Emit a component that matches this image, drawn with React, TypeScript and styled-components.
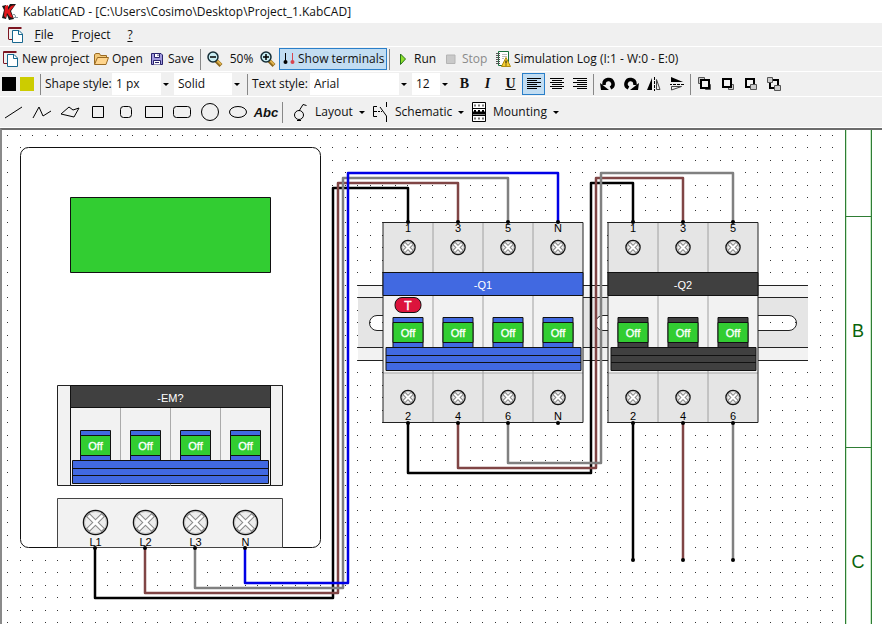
import React from "react";
import styled, { createGlobalStyle, css } from "styled-components";

const Global = createGlobalStyle`
  * { box-sizing: border-box; }
  body { margin: 0; overflow: hidden; }
  button, select { font: inherit; color: inherit; }
`;

const Window = styled.div`
  display: flex;
  flex-direction: column;
  height: 100vh;
  background: #f0f0f0;
  color: #111;
  font: 12px/16px "Open Sans", "Noto Sans", sans-serif;
`;

const TitleBar = styled.header`
  display: flex;
  align-items: center;
  gap: 4px;
  height: 23px;
  padding-left: 2px;
  background: #fff;
  white-space: nowrap;
`;

const TitleText = styled.h1`
  margin: 0;
  font-size: 12px;
  font-weight: 400;
`;

const MenuBar = styled.nav`
  display: flex;
  align-items: center;
  height: 23px;
  padding-left: 8px;
`;

const MenuButton = styled.button<{ $w: number }>`
  width: ${(p) => p.$w}px;
  padding: 0;
  border: 0;
  background: none;
  text-align: center;
  u { text-underline-offset: 2px; }
`;

const Bar = styled.div<{ $h: number; $indent?: boolean; $last?: boolean }>`
  display: flex;
  flex: none;
  align-items: center;
  height: ${(p) => p.$h}px;
  padding-left: ${(p) => (p.$indent ? 2 : 0)}px;
  border-top: 1px solid #fff;
  ${(p) => p.$last && "border-bottom: 1px solid #fff;"}
  white-space: nowrap;
`;

const Separator = styled.span`
  flex: none;
  width: 5px;
  height: 21px;
  background: linear-gradient(#888, #888) center / 1px 100% no-repeat;
`;

const ToolButton = styled.button<{ $w: number; $on?: boolean; $menu?: boolean }>`
  display: flex;
  flex: none;
  align-items: center;
  gap: ${(p) => (p.$menu ? 6 : 3)}px;
  width: ${(p) => p.$w}px;
  height: 22px;
  padding: ${(p) => (p.$menu ? "0 2px 0 7px" : "0 2px")};
  border: 1px solid transparent;
  background: none;
  &:disabled { color: #8a8a8a; }
  ${(p) =>
    p.$on &&
    css`
      border-color: #2a7fc9;
      background: #c2ddf2;
    `}
`;

const IconButton = styled(ToolButton)`
  justify-content: center;
  padding: 0;
`;

const Letter = styled.span<{ $kind: "b" | "i" | "u" | "abc" }>`
  font-family: "Liberation Serif", serif;
  font-size: 14px;
  font-weight: 700;
  ${(p) => p.$kind === "i" && "font-style: italic;"}
  ${(p) => p.$kind === "u" && "text-decoration: underline;"}
  ${(p) => p.$kind === "abc" && 'font: italic 700 13px "Liberation Sans", sans-serif;'}
`;

const Caret = styled.span`
  width: 0;
  height: 0;
  margin-left: auto;
  border: 3px solid transparent;
  border-top-color: #000;
  border-bottom: 0;
`;

const Swatch = styled.button<{ $color: string }>`
  flex: none;
  width: 14px;
  height: 14px;
  margin-right: 4px;
  padding: 0;
  border: 0;
  background: ${(p) => p.$color};
`;

const Label = styled.label<{ $w: number }>`
  flex: none;
  width: ${(p) => p.$w}px;
  padding-left: 2px;
`;

const SelectBox = styled.span<{ $w: number }>`
  display: grid;
  flex: none;
  align-items: center;
  width: ${(p) => p.$w}px;
  margin-right: 2px;
  > * { grid-area: 1 / 1; }
  ${Caret} { justify-self: end; margin-right: 3px; pointer-events: none; }
`;

const Select = styled.select`
  appearance: none;
  width: 100%;
  height: 22px;
  padding: 0 12px 0 4px;
  border: 0;
  border-radius: 0;
  background: linear-gradient(to left, #f0f0f0 11px, #fff 11px);
`;

const Canvas = styled.main`
  flex: 1;
  min-height: 0;
  overflow: hidden;
  border-top: 2px solid #6c6c6c;
  border-left: 2px solid #8a8a8a;
  background: #fff;
`;

const Sheet = styled.svg`
  display: block;
  width: 100%;
  height: 100%;
  font-family: "Liberation Sans", Arial, sans-serif;
`;

const Glyph = styled.svg`
  display: block;
  flex: none;
  fill: none;
  stroke: #000;
`;

type IconProps = { children: React.ReactNode; w?: number; h?: number };
const Icon = ({ children, w = 16, h = 16 }: IconProps) => (
  <Glyph width={w} height={h} viewBox={`0 0 ${w} ${h}`} aria-hidden="true">
    {children}
  </Glyph>
);

const LogoIcon = () => (
  <Icon w={17}>
    <path d="M0 2 4 1 4 6 8 0H14L9 7 12 15 7 16 5 11 4 15 0 14 2 6Z" fill="#181818" stroke="none" />
    <path d="M3 2 6 1 6 6 9 2 13 1 8 7 11 14 8 13 5 9 4 14 2 12Z" fill="#e3171b" stroke="none" />
    <path d="M11 10.500h2M12 13.500h4M13 11l1 3" stroke="#8798a0" />
  </Icon>
);

const NewIcon = () => (
  <Icon>
    <path d="M.5 12.500V.5H13.500M1 1.500H13.500" stroke="#7d1622" />
    <path d="M1 12.500H4" stroke="#7d1622" />
    <path d="M4.500 3.500H11L14.500 7V15.500H4.500Z" fill="#fff" stroke="#17678f" />
    <path d="M10.500 3.500V7.500H14.500" stroke="#17678f" />
  </Icon>
);

const OpenIcon = () => (
  <Icon>
    <path d="M1.500 13V3.500L3 2.500H6.500L7.500 4.500H13.500V6" fill="#f2c878" stroke="#9a6a22" />
    <path d="M1.500 13.500 4.500 6.500H15.500L13 13.500Z" fill="#ffd58d" stroke="#9a6a22" />
  </Icon>
);

const SaveIcon = () => (
  <Icon>
    <path d="M2.500 2.500H12L13.500 4V13.500H2.500Z" fill="#a29ae0" stroke="#28236b" />
    <path d="M5.500 2.500H10.500V6.500H5.500Z" fill="#fff" stroke="#28236b" />
    <path d="M9 3.500V5" stroke="#28236b" />
    <path d="M4.500 13.500V9.500H11.500V13.500M6 11.500H10" fill="#fff" stroke="#28236b" />
  </Icon>
);

const ZoomIcon = ({ plus }: { plus?: boolean }) => (
  <Icon>
    <path d="M9 9.500 14 14.500" stroke="#8d671a" strokeWidth="4" />
    <path d="M10 9.500 14 13.500" stroke="#e0b24d" strokeWidth="2" />
    <circle cx="6" cy="6" r="5" fill="#c9eef3" stroke="#142c35" strokeWidth="1.500" />
    <path d={plus ? "M3 6H9M6 3V9" : "M3 6H9"} strokeWidth="1.500" />
  </Icon>
);

const TerminalsIcon = () => (
  <Icon w={13}>
    <path d="M3.500 2V11" />
    <circle cx="3.500" cy="11" r="2" fill="#000" stroke="none" />
    <path d="M10.500 2V11" stroke="#d9444f" />
    <circle cx="10.500" cy="11" r="2" fill="#d9444f" stroke="none" />
  </Icon>
);

const RunIcon = () => (
  <Icon>
    <path d="M5.500 3 10.500 8 5.500 13.500Z" fill="#8ee02b" stroke="#267316" />
  </Icon>
);

const StopIcon = () => (
  <Icon>
    <path d="M3.500 4H12V12.500H3.500Z" fill="#c9c9c9" stroke="#b4b4b4" />
  </Icon>
);

const LogIcon = () => (
  <Icon>
    <path d="M3.500 .5H13.500V14.500H3.500Z" fill="#fff" stroke="#16713b" />
    <path d="M1 2.500H5M1 4.500H5M1 6.500H5M1 8.500H5M1 10.500H5M1 12.500H5" stroke="#555" />
    <path d="M7 3.500H12M7 5.500H12M7 7.500H9" stroke="#bbb" />
    <path d="M11 6.500 15.500 15.500H6.500Z" fill="#f6cf31" stroke="#b08d12" />
    <path d="M11 9.500V12.500M11 13.500V14.500" />
  </Icon>
);

const AlignIcon = ({ side }: { side: "left" | "center" | "right" }) => {
  const a = side === "left" ? 0 : side === "center" ? 2 : 4;
  const d = [2, 4, 6, 8, 10, 12]
    .map((y, i) => (i % 2 ? `M${1 + a} ${y}.5h10` : `M1 ${y}.5h14`))
    .join("");
  return <Icon><path d={d} /></Icon>;
};

const RotateIcon = ({ cw }: { cw?: boolean }) => (
  <Icon>
    <g transform={cw ? "translate(16 0) scale(-1 1)" : undefined}>
      <path d="M4 9V8A4.500 4.500 0 1 1 10.500 12" strokeWidth="3.500" />
      <path d="M0 7 9 14H1Z" fill="#000" stroke="none" />
    </g>
  </Icon>
);

const FlipIcon = ({ vertical }: { vertical?: boolean }) => (
  <Icon>
    <g transform={vertical ? "translate(16 0) rotate(90)" : undefined}>
      <path d="M6 2V14H1Z" fill="#000" stroke="none" />
      <path d="M10.500 3.500V13.500H14Z" stroke="#444" />
      <path d="M8.500 1V15" strokeDasharray="3 1" />
    </g>
  </Icon>
);

const OrderIcon = ({ kind }: { kind: number }) => (
  <Icon>
    {kind === 0 && <path d="M1.500 1.500h6v6h-6z" fill="#ccc" stroke="#555" />}
    {kind < 2 && <path d="M8.500 8.500h5v5h-5z" fill="#ccc" stroke="#555" />}
    {kind === 3 ? (
      <>
        <path d="M7 4H12V10M4 7V12H9" strokeWidth="2" />
        <path d="M1.500 1.500h5v5h-5zM8.500 9.500h6v5h-6z" fill="#ccc" stroke="#555" />
      </>
    ) : (
      <path d={kind === 0 ? "M4 4h8v8h-8z" : "M3 3h8v8h-8z"} fill="#f4f4f4" strokeWidth="2" />
    )}
    {kind === 2 && <path d="M7.500 8.500h6v5h-6z" fill="#ccc" stroke="#555" />}
  </Icon>
);

const shapes: [string, React.ReactNode][] = [
  ["Line", <path d="M1 16 18 5" />],
  ["Polyline", <path d="M1 16 7 5 11 14 19 9" />],
  ["Polygon", <path d="M1 12 9 5 13 8 19 6 14 15Z" />],
  ["Square", <path d="M4.500 4.500h11v11h-11z" />],
  ["Rounded square", <rect x="4.500" y="4.500" width="11" height="11" rx="3" />],
  ["Rectangle", <path d="M1.500 4.500h17v11h-17z" />],
  ["Rounded rectangle", <rect x="1.500" y="4.500" width="17" height="11" rx="3" />],
  ["Circle", <circle cx="10" cy="10" r="8.500" />],
  ["Ellipse", <ellipse cx="10" cy="10" rx="8.500" ry="5.500" />],
];

const LayoutIcon = () => (
  <Icon h={20}>
    <circle cx="6" cy="13" r="4.500" />
    <path d="M6 9 10 2.500 13.500 3.500M4 18.500H8" />
  </Icon>
);

const SchematicIcon = () => (
  <Icon h={20}>
    <path d="M4 4.500H.5V14.500H4M1 9.500H4M5 9.500H7M8 9.500H9M13.500 0V5M7 5 13.500 14V20" />
  </Icon>
);

const MountingIcon = () => (
  <Icon h={20}>
    <path d="M1.500 .5H14.500V19.500H1.500Z" fill="#fff" />
    <path d="M1 6.500H15M1 13.500H15" />
    <path d="M3 3.500H13M3 16.500H13" stroke="#777" strokeWidth="2" strokeDasharray="2 2" />
    <path d="M2 11H14" strokeWidth="3" />
    <path d="M3 9H5M7 9H9M11 9H13" strokeWidth="2" />
  </Icon>
);

/* ---------- Drawing sheet ---------- */

const BLUE = "#4169e1";
const DARK = "#404040";
const GREEN = "#32cd32";

const Screw = ({ x, y, big }: { x: number; y: number; big?: boolean }) => {
  const r = big ? 13 : 8;
  const a = big ? 6 : 3;
  const cross = `M${x - a} ${y - a}L${x + a} ${y + a}M${x + a} ${y - a}L${x - a} ${y + a}`;
  return (
    <g>
      <circle cx={x} cy={y} r={r - 1} fill="#eee" stroke="#111" strokeWidth="1.500" />
      <circle cx={x} cy={y} r={r - 2} fill="none" stroke="#bbb" />
      <path d={cross} stroke="#888" strokeWidth={big ? 5 : 4} strokeLinecap="square" />
      <path d={cross} stroke="#fff" strokeWidth={big ? 3 : 2} strokeLinecap="square" />
    </g>
  );
};

const Lever = ({ x, y, color }: { x: number; y: number; color: string }) => (
  <g stroke="#111">
    <path d={`M${x - 15} ${y - 15}h30v31h-30z`} fill={color} />
    <path d={`M${x - 15} ${y - 10}h30v20h-30z`} fill={GREEN} />
    <text x={x} y={y + 4} fontSize="11" textAnchor="middle" fill="#fff" stroke="#fff" strokeWidth=".3">Off</text>
  </g>
);

const Handle = ({ x, y, w, color }: { x: number; y: number; w: number; color: string }) => (
  <path d={`M${x} ${y}h${w}v23h${-w}zM${x} ${y + 8}h${w}M${x} ${y + 15}h${w}`} fill={color} stroke="#111" />
);

const Terminal = ({ x, y }: { x: number; y: number }) => <circle cx={x} cy={y} r="2" fill="#000" />;

type BreakerProps = { x: number; name: string; color: string; top: string[]; bottom: string[]; trip?: boolean };
const Breaker = ({ x, name, color, top, bottom, trip }: BreakerProps) => {
  const w = top.length * 50;
  return (
    <g transform={`translate(${x} 222.500)`}>
      <path d={`M0 0h${w}v200h${-w}z`} fill="#e5e5e5" />
      <path d={`M0 73h${w}v77h${-w}z`} fill="#f2f2f2" />
      <path d={`M0 150.500h${w}`} stroke="#aaa" />
      {top.slice(1).map((_, i) => (
        <path key={i} d={`M${(i + 1) * 50} 0V200`} stroke="#a0a0a0" />
      ))}
      <path d={`M0 0h${w}v200h${-w}z`} fill="none" stroke="#222" />
      <path d={`M0 50h${w}v23h${-w}z`} fill={color} stroke="#111" />
      <text x={w / 2} y="66" fontSize="11" textAnchor="middle" fill="#fff">{name}</text>
      {trip && (
        <g>
          <rect x="12" y="75" width="26" height="15" rx="7" fill="#dc143c" stroke="#111" />
          <text x="25" y="87" fontSize="12" textAnchor="middle" fill="#fff" stroke="#fff" strokeWidth=".4">T</text>
        </g>
      )}
      {top.map((t, i) => (
        <g key={i}>
          <Lever x={i * 50 + 25} y={110} color={color} />
          <Screw x={i * 50 + 25} y={25} />
          <Screw x={i * 50 + 25} y={175} />
          <text x={i * 50 + 25} y="9" fontSize="11" textAnchor="middle">{t}</text>
          <text x={i * 50 + 25} y="197" fontSize="11" textAnchor="middle">{bottom[i]}</text>
        </g>
      ))}
      <Handle x={3} y={125} w={w - 5} color={color} />
    </g>
  );
};

const Meter = () => (
  <g transform="translate(20.500 147.500)">
    <rect width="300" height="400" rx="8" fill="#fff" stroke="#111" />
    <path d="M50 50h200v75h-200z" fill={GREEN} stroke="#111" />
    <path d="M37 238h225v100h-225z" fill="#f2f2f2" stroke="#222" />
    <path d="M50 238h200v100h-200z" fill="#f2f2f2" stroke="#111" />
    <path d="M100 260v78M150 260v78M200 260v78" stroke="#aaa" />
    <path d="M50 238h200v22h-200z" fill={DARK} stroke="#111" />
    <text x="150" y="254" fontSize="11" textAnchor="middle" fill="#fff">-EM?</text>
    <path d="M37 351h225v49h-225z" fill="#f2f2f2" stroke="#444" />
    {["L1", "L2", "L3", "N"].map((t, i) => (
      <g key={t}>
        <Lever x={75 + i * 50} y={298} color={BLUE} />
        <Screw x={75 + i * 50} y={375} big />
        <text x={75 + i * 50} y="398" fontSize="11" textAnchor="middle">{t}</text>
      </g>
    ))}
    <Handle x={52} y={313} w={196} color={BLUE} />
  </g>
);

const slot = (x: number) => `M${x + 7} 315.500h186a7.500 7.500 0 0 1 0 15h-186a7.500 7.500 0 0 1 0 -15z`;

/* DIN rail; the slots are cut out so that the grid shows through. */
const Rail = () => (
  <g stroke="#222">
    <path d="M358 285h450v12h-450zM358 348h450v12h-450z" fill="#f2f2f2" stroke="none" />
    <path d={`M358 297h450v51h-450z${slot(370)}${slot(596)}`} fill="#e5e5e5" fillRule="evenodd" stroke="none" />
    <path d="M358 285.500h450M358 297.500h450M358 347.500h450M358 360.500h450" />
    <path d={slot(370) + slot(596)} fill="none" />
  </g>
);

const K = "#000";
const BROWN = "#804545";
const GRAY = "#808080";
const wires: [string, string][] = [
  [K, "M95 548V598H333V188H408V222"],
  [BROWN, "M145 548V593H338V183H458V222"],
  [GRAY, "M195 548V588H343V178H508V222"],
  ["#0000e6", "M245 548V583H348V173H558V222"],
  [K, "M408 423V473H591V183H633V222"],
  [BROWN, "M458 423V468H596V178H683V222"],
  [GRAY, "M508 423V463H601V173H733V222"],
  [K, "M633 423V560"],
  [BROWN, "M683 423V560"],
  [GRAY, "M733 423V560"],
];

const terminals: [number[], number][] = [
  [[95, 145, 195, 245], 548],
  [[408, 458, 508, 558, 633, 683, 733], 222],
  [[408, 458, 508, 558, 633, 683, 733], 423],
  [[633, 683, 733], 560],
];

const Drawing = () => (
  <Sheet role="img" aria-label="Panel mounting drawing">
    <defs>
      <pattern id="grid" x="7" y="135" width="25" height="25" patternUnits="userSpaceOnUse">
        <path d="M0 0h1v1h-1zM13 0h1v1h-1zM0 12h1v1h-1zM13 12h1v1h-1z" fill="#333" />
      </pattern>
    </defs>
    <g transform="translate(-2 -130)">
      <rect x="7" y="135" width="827" height="2000" fill="url(#grid)" />
      <Rail />
      <path d="M846.500 130V2000M870.500 130V2000" stroke="#c9ecc9" />
      <path d="M845.500 130V2000M871.500 130V2000M845 216.500H871M845 447.500H871" stroke="#2f7d35" />
      <g fontSize="18" textAnchor="middle" fill="#0a640a">
        <text x="858" y="337">B</text>
        <text x="858" y="568">C</text>
      </g>
      <Meter />
      <Breaker x={383} name="-Q1" color={BLUE} trip top={["1", "3", "5", "N"]} bottom={["2", "4", "6", "N"]} />
      <Breaker x={608} name="-Q2" color={DARK} top={["1", "3", "5"]} bottom={["2", "4", "6"]} />
      {wires.map(([c, d]) => (
        <path key={d} d={d} fill="none" stroke={c} strokeWidth="2.500" strokeLinejoin="round" />
      ))}
      {terminals.map(([xs, y]) => xs.map((x) => <Terminal key={`${x}-${y}`} x={x} y={y} />))}
    </g>
  </Sheet>
);

const Picker = ({ id, w, options, label }: { id: string; w: number; options: string[]; label?: string }) => (
  <SelectBox $w={w}>
    <Select id={id} aria-label={label}>
      {options.map((o) => <option key={o}>{o}</option>)}
    </Select>
    <Caret />
  </SelectBox>
);

export default function App() {
  return (
    <Window>
      <Global />
      <TitleBar>
        <LogoIcon />
        <TitleText>KablatiCAD - [C:\Users\Cosimo\Desktop\Project_1.KabCAD]</TitleText>
      </TitleBar>
      <MenuBar>
        <NewIcon />
        <MenuButton $w={40}><u>F</u>ile</MenuButton>
        <MenuButton $w={54}><u>P</u>roject</MenuButton>
        <MenuButton $w={24}><u>?</u></MenuButton>
      </MenuBar>
      <Bar $h={25}>
        <ToolButton $w={90}><NewIcon />New project</ToolButton>
        <ToolButton $w={56}><OpenIcon />Open</ToolButton>
        <ToolButton $w={52}><SaveIcon />Save</ToolButton>
        <Separator />
        <IconButton $w={24} aria-label="Zoom out"><ZoomIcon /></IconButton>
        <IconButton $w={29}>50%</IconButton>
        <IconButton $w={23} aria-label="Zoom in"><ZoomIcon plus /></IconButton>
        <ToolButton $w={108} $on aria-pressed="true"><TerminalsIcon />Show terminals</ToolButton>
        <Separator />
        <ToolButton $w={48}><RunIcon />Run</ToolButton>
        <ToolButton $w={52} disabled><StopIcon />Stop</ToolButton>
        <ToolButton $w={190}><LogIcon />Simulation Log (I:1 - W:0 - E:0)</ToolButton>
      </Bar>
      <Bar $h={25} $indent>
        <Swatch $color="#000" aria-label="Line color" />
        <Swatch $color="#cccc00" aria-label="Fill color" />
        <Separator />
        <Label $w={69} htmlFor="width">Shape style:</Label>
        <Picker id="width" w={60} options={["1 px"]} />
        <Picker id="dash" w={69} options={["Solid"]} label="Line style" />
        <Separator />
        <Label $w={60} htmlFor="font">Text style:</Label>
        <Picker id="font" w={100} options={["Arial"]} />
        <Picker id="size" w={39} options={["12"]} label="Font size" />
        <IconButton $w={23} aria-label="Bold"><Letter $kind="b">B</Letter></IconButton>
        <IconButton $w={23} aria-label="Italic"><Letter $kind="i">I</Letter></IconButton>
        <IconButton $w={23} aria-label="Underline"><Letter $kind="u">U</Letter></IconButton>
        <IconButton $w={23} $on aria-label="Align left" aria-pressed="true"><AlignIcon side="left" /></IconButton>
        <IconButton $w={23} aria-label="Align center"><AlignIcon side="center" /></IconButton>
        <IconButton $w={23} aria-label="Align right"><AlignIcon side="right" /></IconButton>
        <Separator />
        <IconButton $w={23} aria-label="Rotate left"><RotateIcon /></IconButton>
        <IconButton $w={23} aria-label="Rotate right"><RotateIcon cw /></IconButton>
        <IconButton $w={23} aria-label="Flip horizontal"><FlipIcon /></IconButton>
        <IconButton $w={23} aria-label="Flip vertical"><FlipIcon vertical /></IconButton>
        <Separator />
        {["Bring to front", "Bring forward", "Send backward", "Send to back"].map((t, i) => (
          <IconButton key={t} $w={23} aria-label={t}><OrderIcon kind={i} /></IconButton>
        ))}
      </Bar>
      <Bar $h={32} $last>
        {shapes.map(([name, shape]) => (
          <IconButton key={name} $w={28} aria-label={name}><Icon w={20} h={20}>{shape}</Icon></IconButton>
        ))}
        <IconButton $w={28} aria-label="Text"><Letter $kind="abc">Abc</Letter></IconButton>
        <Separator />
        <ToolButton $w={80} $menu><LayoutIcon />Layout<Caret /></ToolButton>
        <ToolButton $w={98} $menu><SchematicIcon />Schematic<Caret /></ToolButton>
        <ToolButton $w={98} $menu><MountingIcon />Mounting<Caret /></ToolButton>
      </Bar>
      <Canvas><Drawing /></Canvas>
    </Window>
  );
}
